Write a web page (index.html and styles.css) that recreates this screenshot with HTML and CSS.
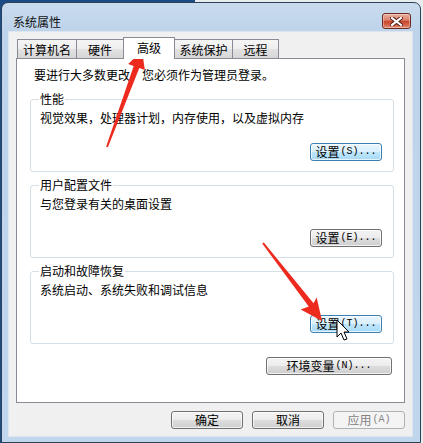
FILE: index.html
```html
<!DOCTYPE html>
<html lang="zh-CN">
<head>
<meta charset="utf-8">
<title>系统属性</title>
<link rel="stylesheet" href="styles.css">
</head>
<body>
<div class="window">
  <div class="titlebar">
    <span class="title">系统属性</span>
    <div class="close">
      <svg width="13" height="9" viewBox="0 0 13 9">
        <path d="M2 1 L11 8 M11 1 L2 8" stroke="#4a1a12" stroke-width="4" stroke-linecap="square" fill="none"/>
        <path d="M2 1 L11 8 M11 1 L2 8" stroke="#ffffff" stroke-width="2.2" stroke-linecap="square" fill="none"/>
      </svg>
    </div>
  </div>
  <div class="client">
    <div class="tabs">
      <div class="tab t1">计算机名</div>
      <div class="tab t2">硬件</div>
      <div class="tab sel">高级</div>
      <div class="tab t4">系统保护</div>
      <div class="tab t5">远程</div>
    </div>
    <div class="panel">
      <p class="notice">要进行大多数更改，您必须作为管理员登录。</p>
      <fieldset class="group first">
        <legend>性能</legend>
        <p class="desc">视觉效果，处理器计划，内存使用，以及虚拟内存</p>
        <div class="row"><button class="btn hot">设置<span class="acc">(S)...</span></button></div>
      </fieldset>
      <fieldset class="group">
        <legend>用户配置文件</legend>
        <p class="desc">与您登录有关的桌面设置</p>
        <div class="row"><button class="btn">设置<span class="acc">(E)...</span></button></div>
      </fieldset>
      <fieldset class="group">
        <legend>启动和故障恢复</legend>
        <p class="desc">系统启动、系统失败和调试信息</p>
        <div class="row"><button class="btn hot">设置<span class="acc">(T)...</span></button></div>
      </fieldset>
      <div class="envrow"><button class="btn env">环境变量<span class="acc">(N)...</span></button></div>
    </div>
    <div class="actions">
      <button class="btn">确定</button>
      <button class="btn">取消</button>
      <button class="btn" disabled>应用<span class="acc">(A)</span></button>
    </div>
  </div>
</div>
<svg class="overlay" width="423" height="443" viewBox="0 0 423 443">
  <polygon fill="#ec2a1e" points="142,51 144.9,70.1 139.3,68 107.9,147.3 106.1,146.7 133.7,66 128.1,63.9"/>
  <polygon fill="#ec2a1e" points="322,321 300.7,309.5 308.7,306.5 262.2,243.6 263.8,242.4 313.5,303.2 316.7,297.5"/>
  <path d="M337 320 L337 337 L341 333 L344 340 L347 339 L344 332 L349 332 Z" fill="#ffffff" stroke="#000000" stroke-width="1" stroke-linejoin="miter"/>
</svg>
</body>
</html>
```
FILE: styles.css
```css
* { box-sizing: border-box; }
html, body { margin: 0; padding: 0; }
body {
  width: 423px;
  height: 443px;
  overflow: hidden;
  position: relative;
  font-family: "Noto Sans CJK SC", "Liberation Sans", sans-serif;
  font-size: 12px;
  color: #000;
  background: linear-gradient(to right, #1c4b86 0, #1c4b86 195px, #e9ecef 195px);
}
.window {
  margin: 2px 0 0 1px;
  width: 420px;
  height: 441px;
  border: 1px solid #2c4258;
  border-radius: 7px 7px 0 0;
  background: linear-gradient(180deg, #c9dbee 0, #bdd3ea 30px, #c0d6ec 100%);
  display: flex;
  flex-direction: column;
}
.titlebar {
  height: 29px;
  display: flex;
  align-items: flex-start;
  justify-content: space-between;
  padding: 10px 9px 0 11px;
}
.title {
  margin-top: 2px;
  line-height: 14px;
  font-size: 12px;
  color: #111;
}
.close {
  width: 29px;
  height: 16px;
  border: 1px solid #6b2a20;
  border-radius: 3px;
  background: linear-gradient(180deg, #eab0a2 0%, #dc8068 45%, #c7442b 52%, #d5684f 80%, #e2917c 100%);
  display: flex;
  align-items: center;
  justify-content: center;
  box-shadow: inset 0 0 0 1px rgba(255,255,255,0.35);
}
.close svg { display: block; }
.client {
  flex: 1;
  margin: 0 8px 6px 7px;
  background: #f0f0f0;
  outline: 1px solid #dde6f0;
  display: flex;
  flex-direction: column;
  padding: 5px 7px 7px 7px;
}
.tabs {
  display: flex;
  align-items: flex-end;
  height: 22px;
  margin: 0 0 -1px 1px;
  position: relative;
  z-index: 1;
}
.tab {
  height: 19px;
  margin-bottom: 1px;
  margin-left: -1px;
  border: 1px solid #898c95;
  border-bottom: none;
  background: linear-gradient(180deg, #f5f5f5 0%, #eeeeee 50%, #e2e2e2 52%, #d6d6d6 100%);
  display: flex;
  align-items: center;
  justify-content: center;
  line-height: 14px;
  padding-top: 1px;
}
.tab.t1 { width: 60px; margin-left: 0; }
.tab.t2 { width: 48px; }
.tab.sel {
  width: 52px;
  height: 22px;
  margin-bottom: 0;
  background: #ffffff;
  position: relative;
  z-index: 2;
  padding-top: 0;
  padding-bottom: 2px;
}
.tab.t4 { width: 59px; }
.tab.t5 { width: 47px; }
.panel {
  width: 389px;
  height: 345px;
  border: 1px solid #898c95;
  background: #ffffff;
  padding: 9px 0 0 13px;
  display: flex;
  flex-direction: column;
  align-items: flex-start;
}
.notice {
  margin: 0;
  padding-left: 4px;
  line-height: 14px;
}
.group {
  width: 364px;
  margin: 6px 0 0 0;
  padding: 5px 11px 10px 9px;
  border: 1px solid #d5dfe5;
  border-radius: 3px;
  min-width: 0;
}
.group.first { margin-top: 10px; }
.group legend {
  padding: 0 1px;
  margin-left: -1px;
  line-height: 14px;
}
.desc {
  margin: 0;
  line-height: 14px;
}
.row {
  display: flex;
  justify-content: flex-end;
  margin-top: 18px;
}
.btn {
  width: 72px;
  height: 18px;
  padding: 0;
  margin: 0;
  font-family: "Noto Sans CJK SC", "Liberation Sans", sans-serif;
  font-size: 12px;
  line-height: 16px;
  color: #000;
  border: 1px solid #707070;
  border-radius: 3px;
  background: linear-gradient(180deg, #f4f4f4 0%, #ececec 48%, #dddddd 52%, #cfcfcf 100%);
  box-shadow: inset 0 0 0 1px rgba(255,255,255,0.7);
  display: inline-flex;
  align-items: center;
  justify-content: center;
}
.btn.hot {
  border-color: #3c7fb1;
  background: linear-gradient(180deg, #eaf6fd 0%, #d9f0fc 48%, #bee6fd 52%, #a7d9f5 100%);
}
.btn:disabled {
  border-color: #adb2b5;
  background: #f4f4f4;
  color: #838383;
  box-shadow: none;
}
.acc {
  font-family: "Liberation Mono", "DejaVu Sans Mono", monospace;
  font-size: 10px;
  margin-left: 1px;
}
.envrow {
  width: 364px;
  padding-right: 2px;
  display: flex;
  justify-content: flex-end;
  margin-top: 13px;
}
.btn.env { width: 126px; }
.actions {
  display: flex;
  justify-content: flex-end;
  gap: 9px;
  margin-top: 8px;
  padding-right: 0;
}
.overlay {
  position: absolute;
  left: 0;
  top: 0;
  pointer-events: none;
}
```
